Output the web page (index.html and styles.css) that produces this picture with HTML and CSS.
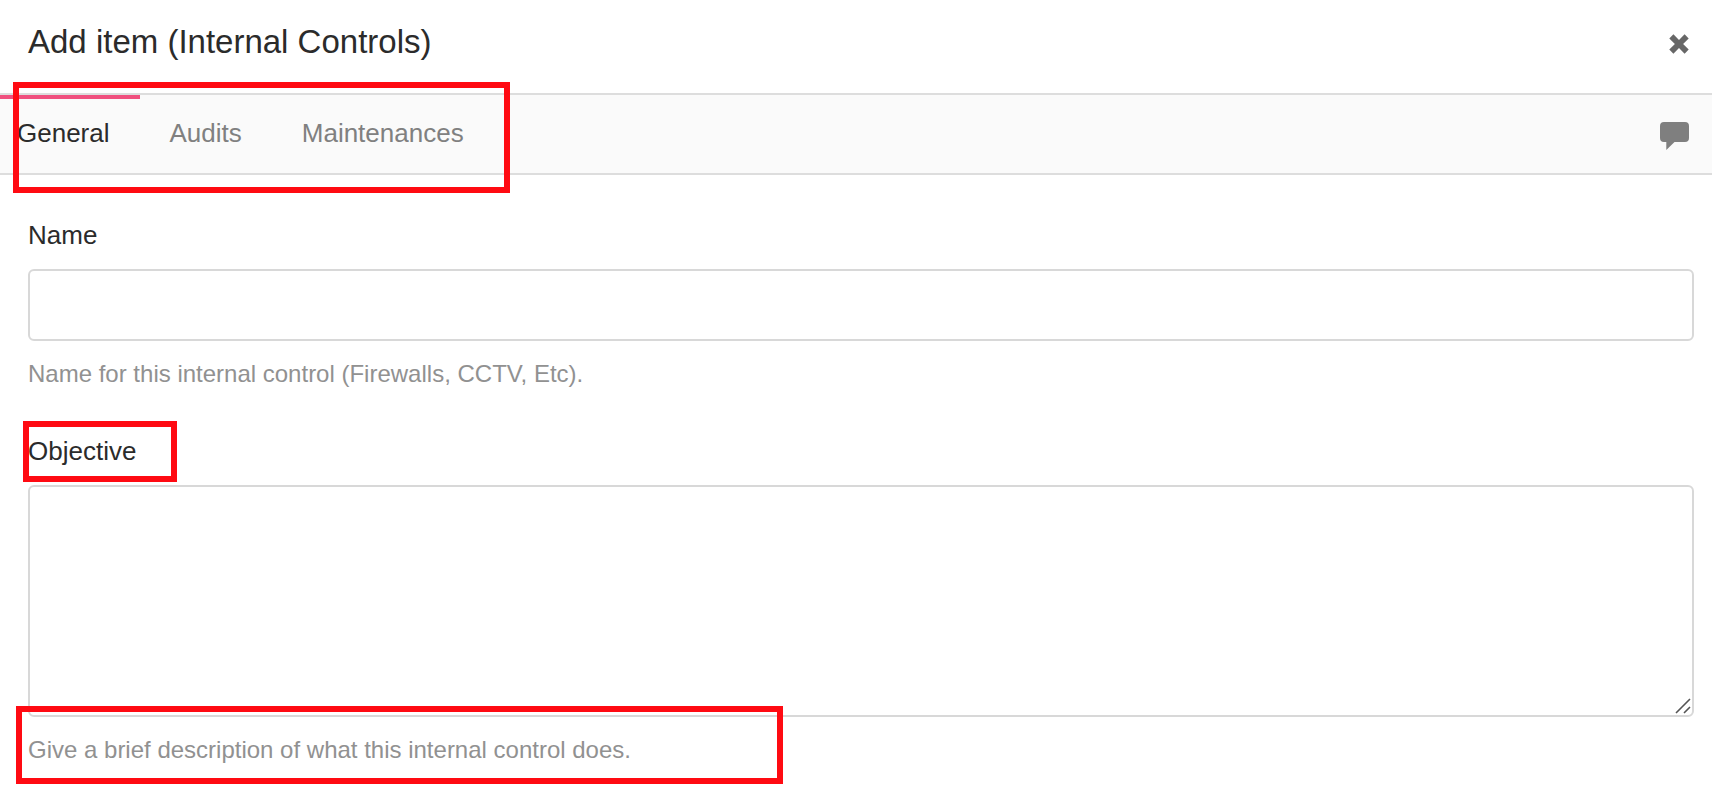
FILE: index.html
```html
<!DOCTYPE html>
<html lang="en">
<head>
<meta charset="utf-8">
<title>Add item (Internal Controls)</title>
<link rel="stylesheet" href="styles.css">
</head>
<body>
<main class="modal">
  <header class="modal-header">
    <h1 class="modal-title">Add item (Internal Controls)</h1>
    <button class="icon-button" type="button" aria-label="Close">
      <svg class="close-icon" width="20" height="20" viewBox="0 0 20 20" aria-hidden="true"><path d="M4.4 0.3 10 5.9 15.6 0.3 19.7 4.4 14.1 10 19.7 15.6 15.6 19.7 10 14.1 4.4 19.7 0.3 15.6 5.9 10 0.3 4.4Z"/></svg>
    </button>
  </header>
  <div class="tab-bar">
    <nav class="tabs" aria-label="Sections">
      <a class="tab tab-active" href="#general" aria-current="page">General</a>
      <a class="tab" href="#audits">Audits</a>
      <a class="tab" href="#maintenances">Maintenances</a>
    </nav>
    <button class="icon-button" type="button" aria-label="Comments">
      <svg class="comment-icon" width="29" height="28" viewBox="0 0 29 28" aria-hidden="true"><path d="M4 0H25Q29 0 29 4V16Q29 20 25 20H14.5L6.3 28V20H4Q0 20 0 16V4Q0 0 4 0Z"/></svg>
    </button>
    <span class="mark mark-tabs"></span>
  </div>
  <form class="form" id="general">
    <div class="field">
      <label class="label" for="name">Name</label>
      <input class="control" id="name" type="text" aria-describedby="name-help">
      <p class="help" id="name-help">Name for this internal control (Firewalls, CCTV, Etc).</p>
    </div>
    <div class="field">
      <label class="label" for="objective">Objective<span class="mark mark-label"></span></label>
      <div class="area">
        <textarea class="control control-area" id="objective" aria-describedby="objective-help"></textarea>
        <svg class="grip" width="16" height="16" viewBox="0 0 16 16" aria-hidden="true"><path d="M1 15 15 1M9 15 15 9"/></svg>
      </div>
      <p class="help" id="objective-help">Give a brief description of what this internal control does.<span class="mark mark-help"></span></p>
    </div>
  </form>
</main>
</body>
</html>
```
FILE: styles.css
```css
* {
  box-sizing: border-box;
}

body {
  margin: 0;
  background: #fff;
  color: #2b2b2b;
  font-family: "Liberation Sans", Arial, sans-serif;
  font-size: 26px;
  line-height: 40px;
}

.modal-header {
  display: flex;
  align-items: center;
  justify-content: space-between;
  padding: 22px 23px 31px 28px;
}

.modal-title {
  margin: 0;
  font-size: 33px;
  font-weight: 400;
}

.icon-button {
  display: flex;
  padding: 4px 0 0;
  border: 0;
  background: none;
  cursor: pointer;
}

.close-icon {
  fill: #676767;
}

.comment-icon {
  fill: #7f7f7f;
}

.tab-bar {
  position: relative;
  display: flex;
  align-items: center;
  justify-content: space-between;
  padding-right: 23px;
  border-top: 2px solid #ddd;
  border-bottom: 2px solid #ddd;
  background: #fafafa;
}

.tabs {
  display: flex;
}

.tab {
  padding: 14px 30px 20px;
  border-top: 4px solid transparent;
  color: #808080;
  text-decoration: none;
}

.tab-active {
  padding-left: 17px;
  border-top-color: #f0507f;
  color: #2b2b2b;
}

.form {
  display: flex;
  flex-direction: column;
  gap: 37px;
  padding: 40px 18px 32px 28px;
}

.field {
  display: flex;
  flex-direction: column;
  align-items: stretch;
}

.label {
  position: relative;
  align-self: flex-start;
  margin-bottom: 14px;
}

.control {
  display: block;
  width: 100%;
  padding: 14px 20px;
  border: 2px solid #d8d8d8;
  border-radius: 6px;
  background: #fff;
  color: inherit;
  font: inherit;
  outline: 0;
}

.control:not(.control-area) {
  height: 72px;
}

.control-area {
  height: 232px;
  resize: none;
}

.area {
  position: relative;
}

.grip {
  position: absolute;
  right: 3px;
  bottom: 3px;
  fill: none;
  stroke: #555;
  stroke-width: 1.6;
}

.help {
  position: relative;
  align-self: flex-start;
  margin: 13px 0 0;
  color: #919191;
  font-size: 24px;
}

.mark {
  position: absolute;
  border: 6px solid #ff0a12;
  pointer-events: none;
}

.mark-tabs {
  top: -13px;
  bottom: -20px;
  left: 13px;
  width: 497px;
}

.mark-label {
  top: -10px;
  right: -41px;
  bottom: -11px;
  left: -5px;
}

.mark-help {
  top: -24px;
  right: -152px;
  bottom: -14px;
  left: -12px;
}
```
